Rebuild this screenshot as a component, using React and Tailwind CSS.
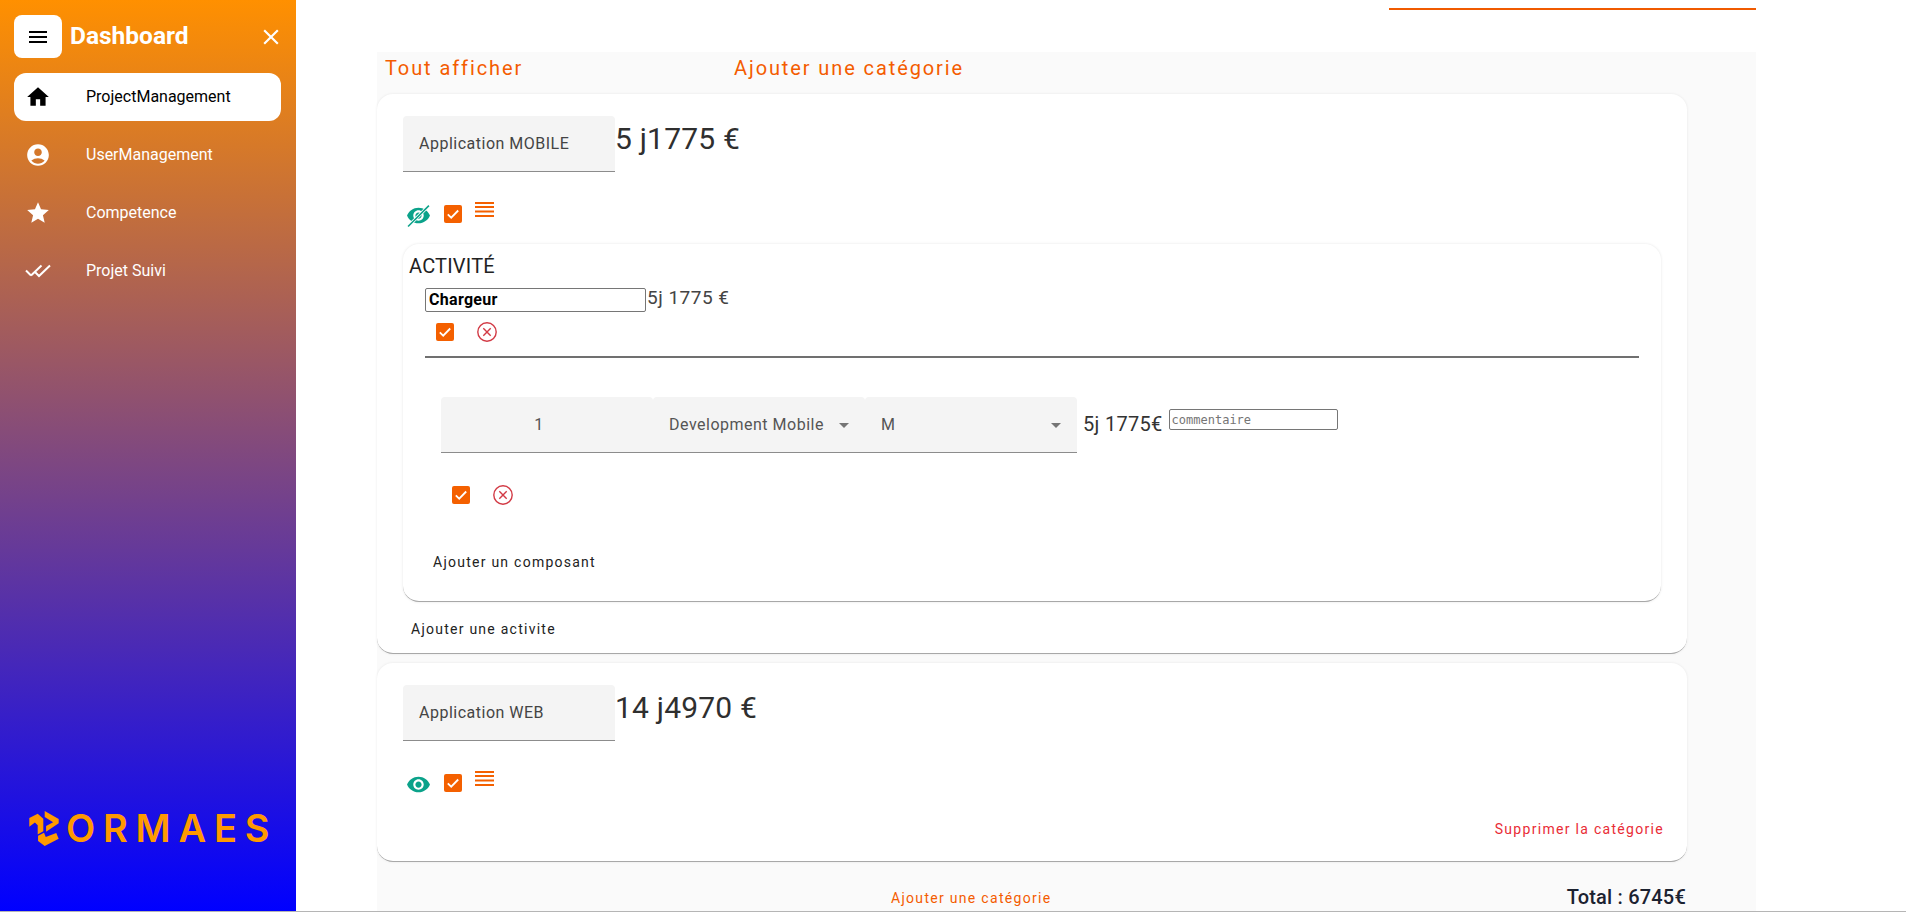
import React from "react";
import { MdMenu, MdClose, MdHome, MdAccountCircle, MdStar, MdArrowDropDown } from "react-icons/md";

const EYE = "M12 4.5C7 4.5 2.73 7.61 1 12c1.73 4.39 6 7.5 11 7.5s9.27-3.11 11-7.5c-1.73-4.39-6-7.5-11-7.5zM12 17c-2.76 0-5-2.24-5-5s2.24-5 5-5 5 2.24 5 5-2.24 5-5 5zm0-8c-1.66 0-3 1.34-3 3s1.34 3 3 3 3-1.34 3-3-1.34-3-3-3z";

function DoneAll() {
  return (
    <svg width="26" height="14" viewBox="0 0 26 14" fill="none" stroke="currentColor" strokeWidth="2">
      <path d="M1 6.5l5 5" />
      <path d="M6 11.5L16.5 1.5" />
      <path d="M10 8l4 4L25 1.5" />
    </svg>
  );
}

function Check({ className = "" }) {
  return (
    <svg width="18" height="18" viewBox="0 0 18 18" className={className}>
      <rect width="18" height="18" rx="2" fill="#f46000" />
      <path d="M3.8 9.4l3.4 3.3 7-7.2" fill="none" stroke="#fff" strokeWidth="1.8" />
    </svg>
  );
}

function CircleX({ className = "" }) {
  return (
    <svg width="20" height="20" viewBox="0 0 20 20" fill="none" stroke="#d23a45" strokeWidth="1.4" className={className}>
      <circle cx="10" cy="10" r="9.2" />
      <path d="M6.3 6.3l7.4 7.4M13.7 6.3l-7.4 7.4" />
    </svg>
  );
}

function Lines() {
  return (
    <svg width="19" height="15" viewBox="0 0 19 15" fill="#f46000">
      <rect y="0" width="19" height="2" />
      <rect y="4" width="19" height="2" />
      <rect y="8.5" width="19" height="2" />
      <rect y="13" width="19" height="2" />
    </svg>
  );
}

function EyeIcon({ off }) {
  return (
    <svg width="25" height="25" viewBox="0 0 24 24">
      <path d={EYE} fill="#0ba28a" />
      {off && <path d="M2 22.5L22 2.5" stroke="#fff" strokeWidth="3" />}
      {off && <path d="M2 22.5L22 2.5" stroke="#0ba28a" strokeWidth="1.5" />}
    </svg>
  );
}

function Logo() {
  return (
    <div className="flex items-center pl-[29px] text-[#ff9a00]">
      <svg width="30" height="35" viewBox="28 25 84 100" fill="#ff9a00">
        <path d="M28 45L52 33l16 14v36l-16 9V66l-8-8-16 12z" />
        <path d="M72 25l40 23v12L76 84V68l20-11-24-15z" />
        <path d="M53 96l17-9 5 12 30-11 7 16-40 21-19-14z" />
      </svg>
      <span className="ml-[7px] font-[Inter,sans-serif] text-[38px] leading-none font-semibold tracking-[7.8px] whitespace-nowrap">ORMAES</span>
    </div>
  );
}

function NavItem({ icon, label, active }) {
  return (
    <div className={`flex h-[48px] items-center rounded-xl ${active ? "bg-white text-black" : "text-white"}`}>
      <div className="flex w-[48px] justify-center text-[26px]">{icon}</div>
      <span className="ml-[24px] text-[16px] leading-none">{label}</span>
    </div>
  );
}

function Sidebar() {
  return (
    <aside className="flex h-[911px] w-[296px] shrink-0 flex-col justify-between bg-linear-to-b/srgb from-[#ff9000] to-[#0000ff] px-[14px] pt-[15px] pb-[64px] text-white">
      <div>
        <div className="flex h-[43px] items-center">
          <div className="flex h-[43px] w-[48px] items-center justify-center rounded-lg bg-white text-[24px] text-black">
            <MdMenu />
          </div>
          <span className="ml-[8px] text-[24.5px] font-bold leading-none">Dashboard</span>
          <MdClose className="ml-auto -mr-[2px] text-[26px]" />
        </div>
        <nav className="mt-[15px] flex w-[267px] flex-col gap-[10px]">
          <NavItem active icon={<MdHome />} label="ProjectManagement" />
          <NavItem icon={<MdAccountCircle />} label="UserManagement" />
          <NavItem icon={<MdStar />} label="Competence" />
          <NavItem icon={<DoneAll />} label="Projet Suivi" />
        </nav>
      </div>
      <div className="-mx-[14px]">
        <Logo />
      </div>
    </aside>
  );
}

function Field({ children, className = "" }) {
  return (
    <div className={`flex h-[56px] items-center rounded-t border-b border-[#8c8c8c] bg-[#f4f4f4] text-[16px] tracking-[0.5px] text-[#444] ${className}`}>
      {children}
    </div>
  );
}

function CategoryHead({ name, total, off }) {
  return (
    <>
      <div className="flex items-start">
        <Field className="w-[212px] pl-[16px] text-[16px]">{name}</Field>
        <span className="text-[30px] leading-[45px] tracking-[0.2px] text-[#2f2f2f]">{total}</span>
      </div>
      <div className="mt-[31px] flex h-[20px] items-start">
        <div className="ml-[3px]"><EyeIcon off={off} /></div>
        <Check className="ml-[13px] mt-[2px]" />
        <div className="ml-[13px] -mt-[1px]"><Lines /></div>
      </div>
    </>
  );
}

function App() {
  return (
    <div className="flex h-[912px] w-[1906px] overflow-hidden border-b border-[#b5b5b5] bg-white font-[Roboto,sans-serif]">
      <Sidebar />
      <main className="ml-[81px] flex h-[911px] w-[1379px] flex-col">
        <div className="ml-auto mt-[8px] h-[2px] w-[367px] bg-[#f05a00]" />
        <section className="mt-[42px] flex-1 bg-[#fafafa]">
          <div className="flex h-[42px] items-center pb-[11px] text-[20px] tracking-[1.9px] text-[#f45c00]">
            <span className="ml-[8px] w-[349px]">Tout afficher</span>
            <span>Ajouter une catégorie</span>
          </div>

          <div className="h-[560px] w-[1310px] rounded-2xl border-b border-[#a8a8a8] bg-white px-[26px] pt-[22px] shadow-[0_0_3px_rgba(0,0,0,0.08)]">
            <CategoryHead name="Application MOBILE" total="5 j1775 €" off />

            <div className="mt-[21px] h-[358px] w-[1258px] rounded-2xl border-b border-[#a8a8a8] bg-white pt-[7px] shadow-[0_0_3px_rgba(0,0,0,0.1)]">
              <div className="ml-[6px] text-[20px] leading-[30px] tracking-[0.2px] text-[#222]">ACTIVITÉ</div>
              <div className="ml-[22px] mt-[7px] flex items-start">
                <input
                  readOnly
                  value="Chargeur"
                  className="h-[24px] w-[221px] rounded-[2px] border border-[#767676] pl-[3px] font-[Roboto,sans-serif] text-[16px] font-bold tracking-[0.3px] text-black"
                />
                <span className="ml-[1px] text-[19px] leading-[20px] tracking-[0.5px] text-[#444]">5j 1775 €</span>
              </div>
              <div className="ml-[33px] mt-[10px] flex items-center">
                <Check />
                <CircleX className="ml-[23px]" />
              </div>
              <div className="ml-[22px] mt-[14px] h-[2px] w-[1214px] bg-[#707070]" />

              <div className="ml-[38px] mt-[39px] flex items-start">
                <Field className="w-[212px] justify-center pr-[16px] text-[#555]">1</Field>
                <Field className="w-[212px] justify-between pl-[16px] pr-[9px] text-[#555]">
                  <span className="whitespace-nowrap">Development Mobile</span>
                  <MdArrowDropDown className="text-[24px] text-[#757575]" />
                </Field>
                <Field className="w-[212px] justify-between pl-[16px] pr-[9px] text-[#555]">
                  <span>M</span>
                  <MdArrowDropDown className="text-[24px] text-[#757575]" />
                </Field>
                <span className="ml-[6px] mt-[12px] text-[20px] leading-[30px] tracking-[0.3px] text-[#333] whitespace-nowrap">5j 1775€</span>
                <input
                  readOnly
                  placeholder="commentaire"
                  className="ml-[6px] mt-[12px] h-[21px] w-[169px] rounded-[2px] border border-[#767676] pl-[2px] font-['DejaVu_Sans_Mono',monospace] text-[12px] placeholder:text-[#757575]"
                />
              </div>

              <div className="ml-[49px] mt-[32px] flex items-center">
                <Check />
                <CircleX className="ml-[23px]" />
              </div>
              <div className="ml-[30px] mt-[37px] text-[14px] leading-[40px] tracking-[1.25px] text-[#222]">Ajouter un composant</div>
            </div>

            <div className="ml-[8px] mt-[7px] text-[14px] leading-[40px] tracking-[1.25px] text-[#222]">Ajouter une activite</div>
          </div>

          <div className="mt-[9px] flex h-[199px] w-[1310px] flex-col rounded-2xl border-b border-[#a8a8a8] bg-white px-[26px] pt-[22px] shadow-[0_0_3px_rgba(0,0,0,0.08)]">
            <CategoryHead name="Application WEB" total="14 j4970 €" />
            <div className="-mr-[3px] mt-[27px] self-end text-[14px] leading-[20px] tracking-[1.3px] text-[#e92c36]">Supprimer la catégorie</div>
          </div>

          <div className="flex h-[49px] w-[1309px] items-center pt-[23px]">
            <span className="ml-[514px] text-[14px] tracking-[1.3px] text-[#f45c00]">Ajouter une catégorie</span>
            <span className="mb-[2px] ml-auto text-[20px] font-medium tracking-[0.2px] text-[#1c2230]">Total : 6745€</span>
          </div>
        </section>
      </main>
    </div>
  );
}

export default App;
